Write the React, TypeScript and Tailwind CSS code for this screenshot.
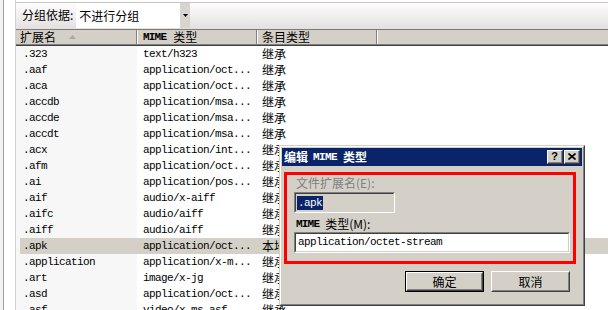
const rows: [string, string, string][] = [
  ['.323', 'text/h323', '继承'],
  ['.aaf', 'application/oct...', '继承'],
  ['.aca', 'application/oct...', '继承'],
  ['.accdb', 'application/msa...', '继承'],
  ['.accde', 'application/msa...', '继承'],
  ['.accdt', 'application/msa...', '继承'],
  ['.acx', 'application/int...', '继承'],
  ['.afm', 'application/oct...', '继承'],
  ['.ai', 'application/pos...', '继承'],
  ['.aif', 'audio/x-aiff', '继承'],
  ['.aifc', 'audio/aiff', '继承'],
  ['.aiff', 'audio/aiff', '继承'],
  ['.apk', 'application/oct...', '本地'],
  ['.application', 'application/x-m...', '继承'],
  ['.art', 'image/x-jg', '继承'],
  ['.asd', 'application/oct...', '继承'],
  ['.asf', 'video/x-ms-asf', '继承'],
];

const cjk = "font-['Noto_Sans_CJK_SC',sans-serif] text-[12px]";
const mono = "font-['Liberation_Mono','Noto_Sans_CJK_SC',monospace] text-[11px] tracking-[-0.6px]";

function Row({ ext, mime, kind, selected }: { ext: string; mime: string; kind: string; selected: boolean }) {
  return (
    <div className="flex h-[16px] shrink-0">
      <div className="w-[4px] bg-[#f7f7f7]" />
      <div className={`flex flex-1 items-center leading-[16px] text-black ${selected ? 'bg-[#d4d0c8]' : ''}`}>
        <div className={`h-full w-[117px] pl-[3px] ${mono} ${selected ? '' : 'bg-[#f7f7f7]'}`}>{ext}</div>
        <div className={`h-full w-[120px] pl-[6px] ${mono}`}>{mime}</div>
        <div className={`h-full pl-[5px] ${cjk} leading-[16px]`}>{kind}</div>
      </div>
    </div>
  );
}

function Header() {
  return (
    <div className="flex shrink-0 flex-col">
      <div className="h-px bg-[#7a7a7a]" />
      <div className={`flex h-[14px] bg-[#d4d0c8] leading-[14px] text-black ${cjk}`}>
        <div className="relative flex w-[121px] items-center border-r border-[#808080] pl-[4px]">
          扩展名
          <svg className="absolute left-[53px] top-[5px]" width="7" height="4" viewBox="0 0 7 4">
            <path d="M3.5 0 L7 4 L0 4 Z" fill="#a8a8a8" />
          </svg>
        </div>
        <div className="flex w-[120px] items-center border-l border-r border-l-white border-r-[#808080] pl-[5px]">
          <span className="font-['Liberation_Mono',monospace] text-[11px] font-bold tracking-[-0.8px]">MIME</span>
          <span className="ml-[7px]">类型</span>
        </div>
        <div className="flex w-[120px] items-center border-l border-r border-l-white border-r-[#808080] pl-[4px]">
          条目类型
        </div>
        <div className="flex-1 border-l border-white" />
      </div>
      <div className="h-px bg-[#808080]" />
      <div className="h-px bg-[#404040]" />
    </div>
  );
}

function WinButton({ label, isDefault }: { label: string; isDefault?: boolean }) {
  const inner = (
    <div className="h-full w-full border border-t-white border-l-white border-r-[#404040] border-b-[#404040]">
      <div className={`flex h-full w-full items-center justify-center border border-t-[#d4d0c8] border-l-[#d4d0c8] border-r-[#808080] border-b-[#808080] text-black ${cjk}`}>
        {label}
      </div>
    </div>
  );
  return (
    <div className={`h-[21px] w-[79px] ${isDefault ? 'border border-black' : ''}`}>{inner}</div>
  );
}

function Sunken({ className, children }: { className: string; children: React.ReactNode }) {
  return (
    <div className={`border border-t-[#808080] border-l-[#808080] border-r-white border-b-white ${className}`}>
      <div className="h-full w-full border border-t-[#404040] border-l-[#404040] border-r-[#d4d0c8] border-b-[#d4d0c8]">
        {children}
      </div>
    </div>
  );
}

function CaptionButton({ children }: { children: React.ReactNode }) {
  return (
    <div className="h-[14px] w-[16px] border border-t-white border-l-white border-r-[#404040] border-b-[#404040] bg-[#d4d0c8]">
      <div className="flex h-full w-full items-center justify-center border-r border-b border-[#808080]">{children}</div>
    </div>
  );
}

function Dialog() {
  return (
    <div className="absolute left-[279px] top-[145px] h-[161px] w-[306px] border border-t-[#d4d0c8] border-l-[#d4d0c8] border-r-[#404040] border-b-[#404040] bg-[#d4d0c8]">
      <div className="flex h-full flex-col border border-t-white border-l-white border-r-[#808080] border-b-[#808080] p-px">
        <div className="flex h-[18px] items-center bg-[#0a246a] pl-[2px] pr-[2px] text-white">
          <span className={`${cjk} font-bold`}>编辑</span>
          <span className="ml-[5px] font-['Liberation_Mono',monospace] text-[11px] font-bold tracking-[-0.6px]">MIME</span>
          <span className={`ml-[6px] ${cjk} font-bold`}>类型</span>
          <div className="ml-auto flex">
            <CaptionButton>
              <span className="font-['Liberation_Sans',sans-serif] text-[11px] font-bold leading-none text-black">?</span>
            </CaptionButton>
            <div className="w-[1px]" />
            <CaptionButton>
              <svg width="8" height="7" viewBox="0 0 8 7">
                <path d="M0.5 0.5 L7.5 6.5 M7.5 0.5 L0.5 6.5" stroke="black" strokeWidth="1.6" />
              </svg>
            </CaptionButton>
          </div>
        </div>
        <div className="ml-[2px] mr-[6px] mt-[6px] h-[92px] border-[3px] border-[#ff0000] pl-[7px] pr-[3px] pt-[1px]">
          <div className={`ml-[2px] h-[14px] leading-[14px] text-[#808080] ${cjk}`}>文件扩展名(E):</div>
          <Sunken className="mt-[2px] h-[21px] w-[101px] bg-[#d4d0c8]">
            <div className="flex h-full items-center pl-[1px]">
              <span className={`bg-[#0a246a] px-px leading-[14px] text-white ${mono}`}>.apk</span>
            </div>
          </Sunken>
          <div className={`ml-[2px] mt-[4px] flex h-[14px] items-center text-black ${cjk}`}>
            <span className="font-['Liberation_Mono',monospace] text-[11px] font-bold tracking-[-0.8px]">MIME</span>
            <span className="ml-[6px]">类型(M):</span>
          </div>
          <Sunken className="mt-[1px] h-[21px] w-[276px] bg-white">
            <div className={`flex h-full items-center pl-[2px] text-black ${mono}`}>application/octet-stream</div>
          </Sunken>
        </div>
        <div className="mt-[7px] flex justify-end gap-[7px] pr-[12px]">
          <WinButton label="确定" isDefault />
          <WinButton label="取消" />
        </div>
      </div>
    </div>
  );
}

export default function App() {
  return (
    <div className="relative flex h-[310px] w-[608px] overflow-hidden bg-white">
      <div className="w-[3px] bg-[#f2f2f2]" />
      <div className="w-px bg-[#a0a0a0]" />
      <div className="w-[11px] bg-white" />
      <div className="w-px bg-[#cfcfcf]" />
      <div className="flex min-w-0 flex-1 flex-col">
        <div className="h-[2px] shrink-0 bg-white" />
        <div className="h-px shrink-0 bg-[#c4c4c4]" />
        <div className="flex h-[26px] shrink-0 items-start bg-gradient-to-b from-[#fefcfc] to-[#e4e0e0] pl-[6px]">
          <span className={`mt-[5px] leading-[14px] text-black ${cjk}`}>分组依据:</span>
          <div className="ml-[3px] flex h-[25px] w-[114px]">
            <div className={`flex flex-1 items-center bg-white pl-[3px] text-black ${cjk}`}>不进行分组</div>
            <div className="flex w-[10px] items-center justify-center bg-[#d8d4d0]">
              <svg width="5" height="3" viewBox="0 0 5 3">
                <path d="M0 0 L5 0 L2.5 3 Z" fill="black" />
              </svg>
            </div>
          </div>
        </div>
        <Header />
        {rows.map(([ext, mime, kind]) => (
          <Row key={ext} ext={ext} mime={mime} kind={kind} selected={ext === '.apk'} />
        ))}
      </div>
      <Dialog />
    </div>
  );
}
